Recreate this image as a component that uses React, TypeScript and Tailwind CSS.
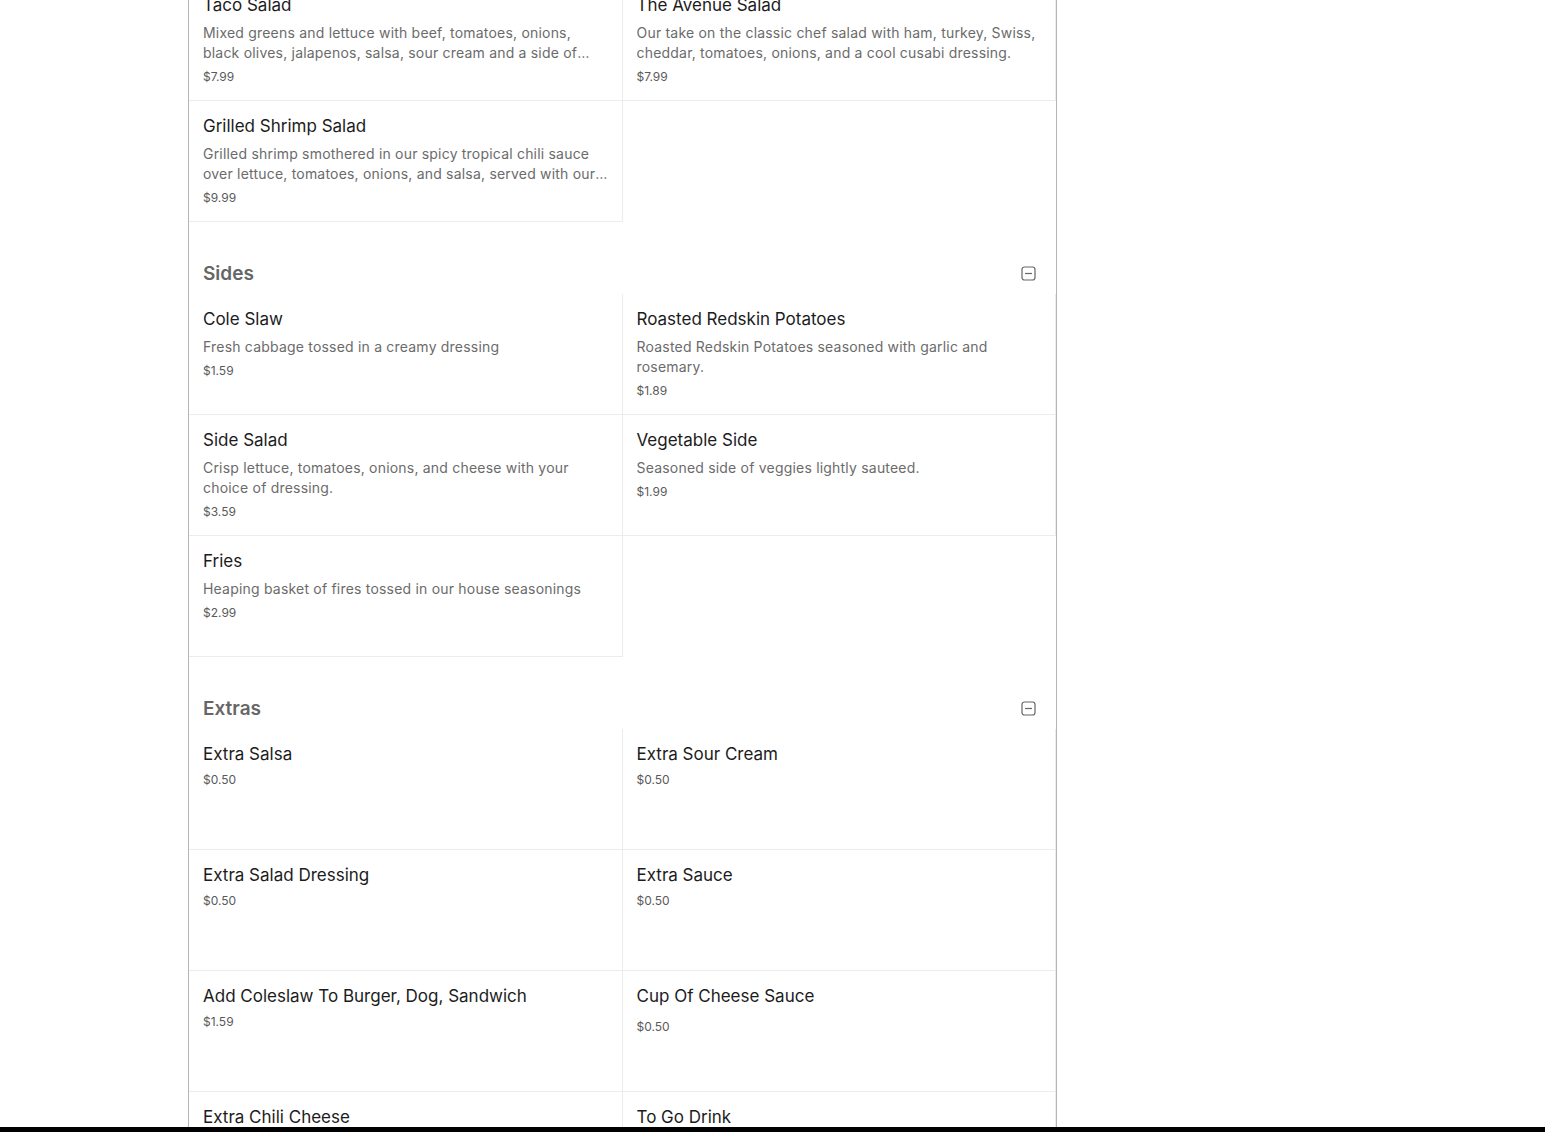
type Item = { name: string; desc?: string; price: string; priceGap?: boolean }

const salads: Item[] = [
  {
    name: 'Taco Salad',
    desc: 'Mixed greens and lettuce with beef, tomatoes, onions, black olives, jalapenos, salsa, sour cream and a side of chips.',
    price: '$7.99',
  },
  {
    name: 'The Avenue Salad',
    desc: 'Our take on the classic chef salad with ham, turkey, Swiss, cheddar, tomatoes, onions, and a cool cusabi dressing.',
    price: '$7.99',
  },
  {
    name: 'Grilled Shrimp Salad',
    desc: 'Grilled shrimp smothered in our spicy tropical chili sauce over lettuce, tomatoes, onions, and salsa, served with our house dressing.',
    price: '$9.99',
  },
]

const sides: Item[] = [
  { name: 'Cole Slaw', desc: 'Fresh cabbage tossed in a creamy dressing', price: '$1.59' },
  { name: 'Roasted Redskin Potatoes', desc: 'Roasted Redskin Potatoes seasoned with garlic and rosemary.', price: '$1.89' },
  { name: 'Side Salad', desc: 'Crisp lettuce, tomatoes, onions, and cheese with your choice of dressing.', price: '$3.59' },
  { name: 'Vegetable Side', desc: 'Seasoned side of veggies lightly sauteed.', price: '$1.99' },
  { name: 'Fries', desc: 'Heaping basket of fires tossed in our house seasonings', price: '$2.99' },
]

const extras: Item[] = [
  { name: 'Extra Salsa', price: '$0.50' },
  { name: 'Extra Sour Cream', price: '$0.50' },
  { name: 'Extra Salad Dressing', price: '$0.50' },
  { name: 'Extra Sauce', price: '$0.50' },
  { name: 'Add Coleslaw To Burger, Dog, Sandwich', price: '$1.59' },
  { name: 'Cup Of Cheese Sauce', price: '$0.50', priceGap: true },
  { name: 'Extra Chili Cheese', price: '$1.00' },
  { name: 'To Go Drink', price: '$0.50' },
]

function MenuCell({ item }: { item: Item }) {
  return (
    <div className="min-h-[121px] border-b border-r border-[#ececec] pl-[14px] pr-[12px] pt-[14px] pb-[15px]">
      <div className="text-[17px] leading-[22px] text-[#1c1c1c]">{item.name}</div>
      {item.desc && (
        <p className="mt-[7px] line-clamp-2 text-[14px] leading-[20px] tracking-[0.2px] text-[#6b6b6b]">
          {item.desc}
        </p>
      )}
      <div
        className={
          'text-[12px] leading-[16px] text-[#5a5a5a] ' +
          (item.desc ? 'mt-[6px]' : item.priceGap ? 'mt-[12px]' : 'mt-[7px]')
        }
      >
        {item.price}
      </div>
    </div>
  )
}

function MinusSquare() {
  return (
    <svg width="15" height="15" viewBox="0 0 15 15" fill="none" className="mb-[2px] text-[#666]">
      <rect x="1" y="1" width="13" height="13" rx="2.5" stroke="currentColor" strokeWidth="1.2" />
      <path d="M4 7.5h7" stroke="currentColor" strokeWidth="1.2" />
    </svg>
  )
}

function Section({ title, items }: { title?: string; items: Item[] }) {
  return (
    <section className={title ? 'pt-[40px]' : ''}>
      {title && (
        <div className="mb-[8px] flex items-center justify-between pl-[14px] pr-[20px]">
          <h2 className="text-[19px] font-semibold leading-[24px] text-[#666]">{title}</h2>
          <MinusSquare />
        </div>
      )}
      <div className="grid grid-cols-2">
        {items.map((item) => (
          <MenuCell key={item.name} item={item} />
        ))}
      </div>
    </section>
  )
}

export default function App() {
  return (
    <div className="min-h-screen bg-white" style={{ fontFamily: 'Inter, "Noto Sans", sans-serif' }}>
      <div className="ml-[188px] w-[869px] border-x border-[#b5b5b5] -mt-[20px] pb-[40px]">
        <Section items={salads} />
        <Section title="Sides" items={sides} />
        <Section title="Extras" items={extras} />
      </div>
      <div className="fixed bottom-0 left-0 right-0 h-[5px] bg-black" />
    </div>
  )
}
